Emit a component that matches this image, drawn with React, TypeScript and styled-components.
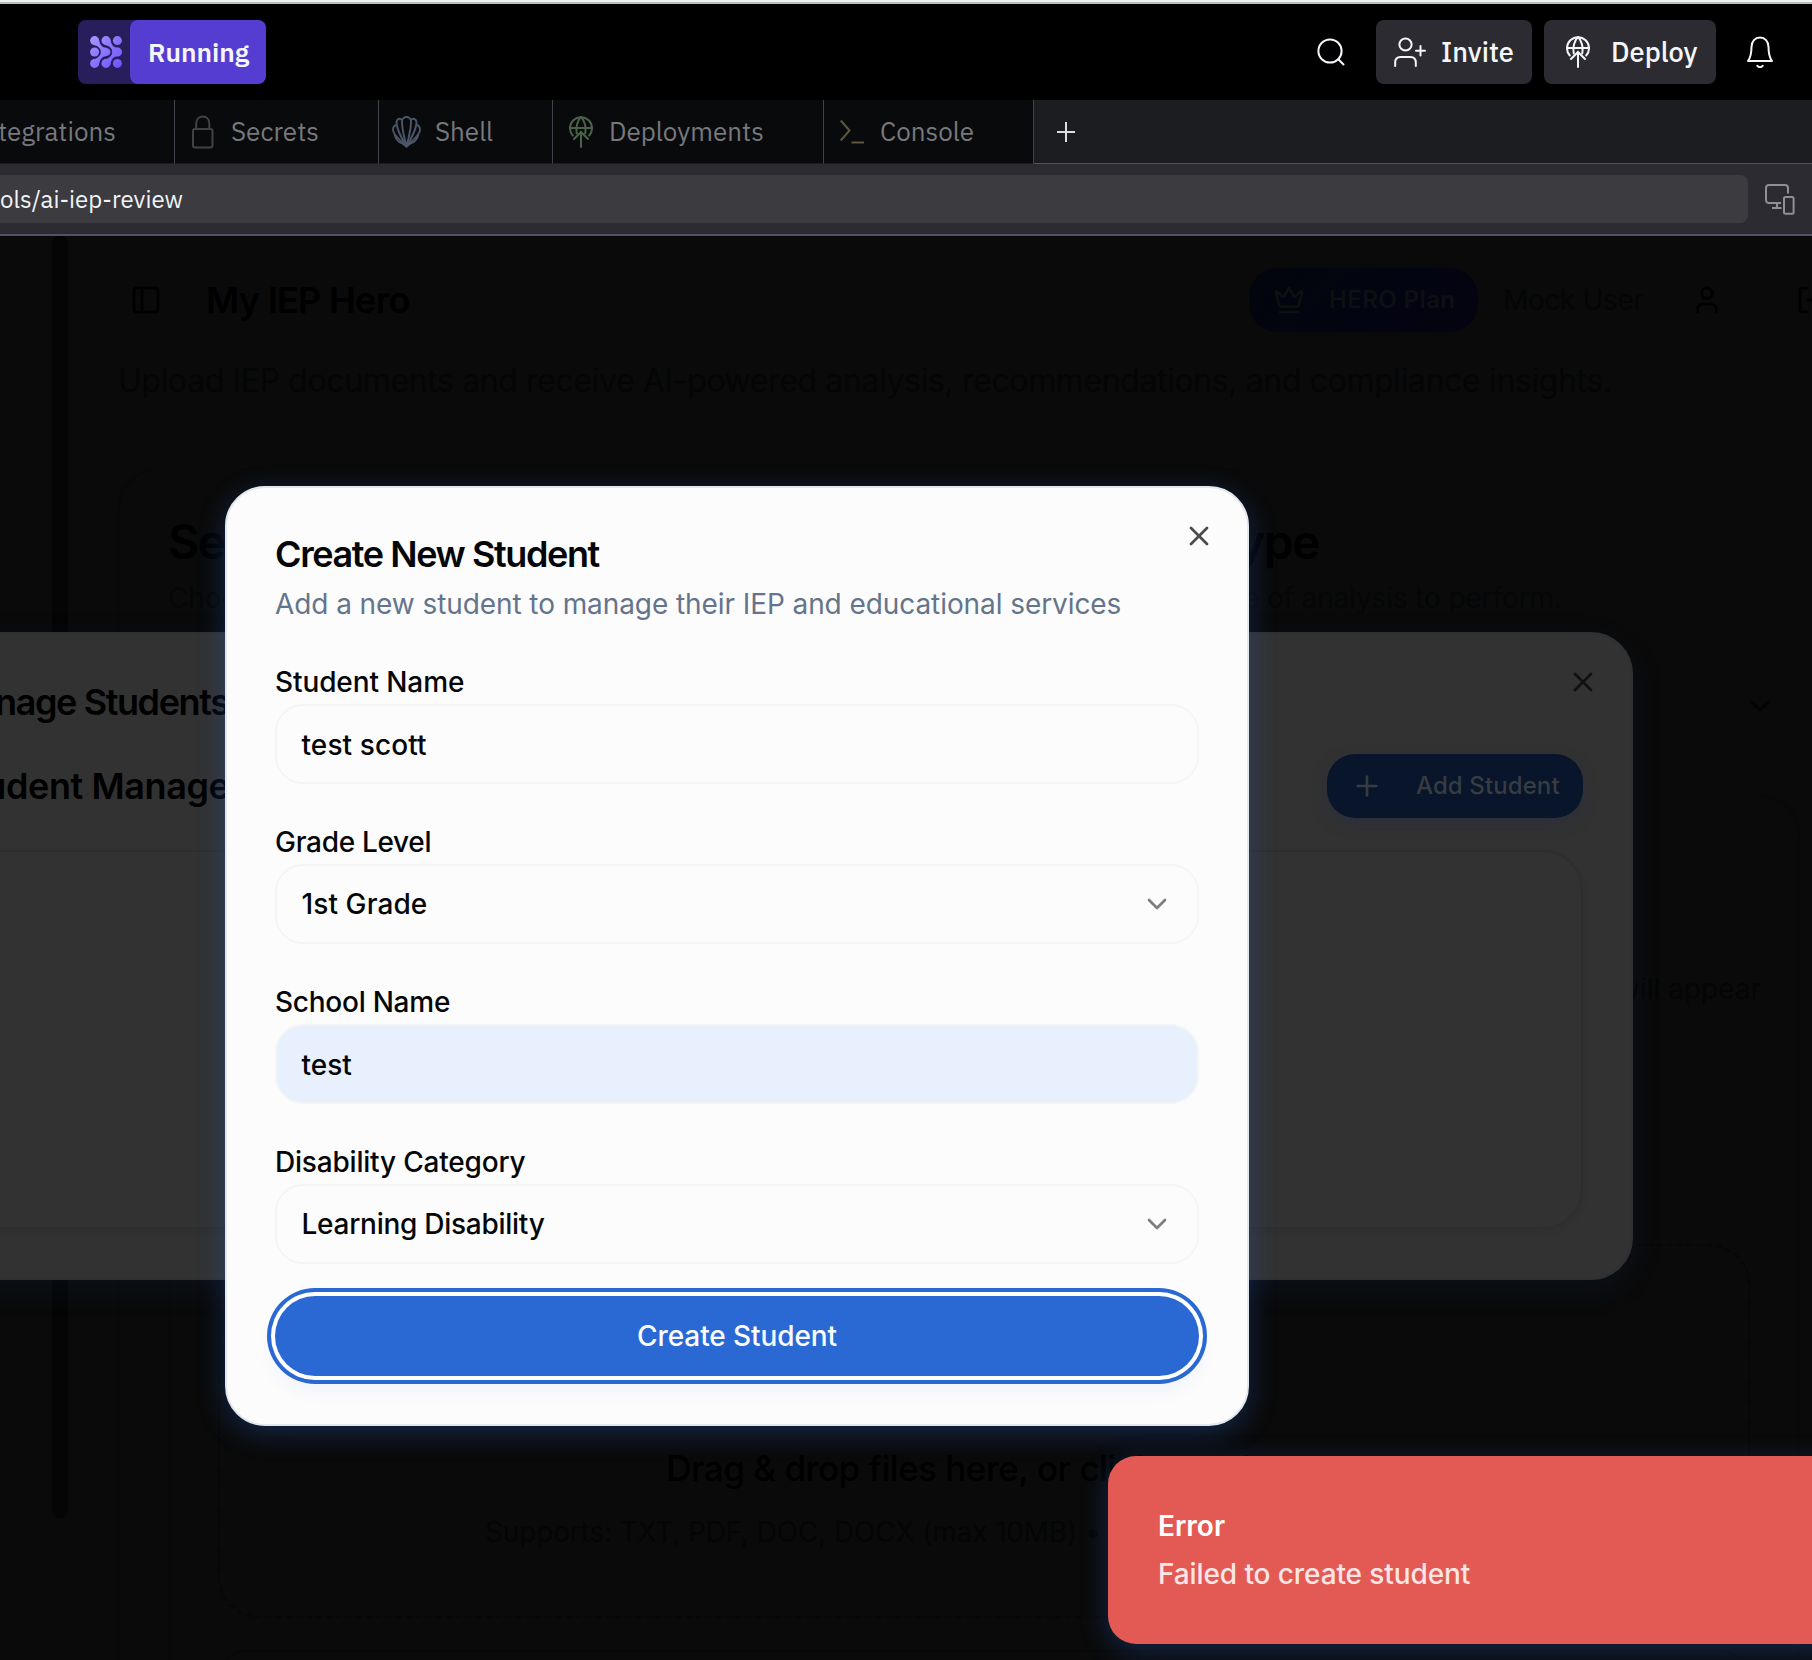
import React from 'react';
import styled, { createGlobalStyle } from 'styled-components';
import { ChevronDown, Crown, LogOut, PanelLeft, Plus, User, X } from 'lucide-react';

const ide = `"IBM Plex Sans", Roboto, "Noto Sans", sans-serif`;
const ui = `Inter, "Noto Sans", sans-serif`;

const Global = createGlobalStyle`
  * { box-sizing: border-box; }
  html, body { margin: 0; background: #000; overflow: hidden; }
  h1, h2, h3, p { margin: 0; font-weight: inherit; font-size: inherit; }
  button { border: 0; padding: 0; background: none; color: inherit; font: inherit; }
`;

const Screen = styled.div`
  position: relative;
  width: 1812px;
  height: 1660px;
  overflow: hidden;
  display: flex;
  flex-direction: column;
  background: #0a0a0a;
  font-family: ${ui};
  white-space: nowrap;
`;

const Txt = styled.span<{ $s: number; $lh: number; $w?: number; $ls?: number; $c?: string; $mt?: number }>`
  display: block;
  flex: none;
  font-size: ${p => p.$s}px;
  line-height: ${p => p.$lh}px;
  font-weight: ${p => p.$w ?? 400};
  letter-spacing: ${p => p.$ls ?? 0}px;
  color: ${p => p.$c ?? 'inherit'};
  && { margin-top: ${p => p.$mt ?? 0}px; }
`;

/* ---------- IDE chrome ---------- */

const TopBar = styled.header`
  flex: none;
  height: 100px;
  padding: 12px 39px 0 78px;
  border-top: 4px solid #b5beba;
  background: #000;
  display: flex;
  align-items: flex-start;
  position: relative;
  font-family: ${ide};
  color: #f5f6fa;
`;

const WindowEdge = styled.div`
  position: absolute;
  top: -4px;
  left: 0;
  right: 0;
  height: 2px;
  background: #eef2f0;
`;

const RunGroup = styled.div`
  display: flex;
  width: 188px;
  height: 64px;
  margin-top: 4px;
  border-radius: 8px;
  background: #281e5c;
`;

const RunMark = styled.div`
  width: 52px;
  height: 64px;
  padding-left: 12px;
  display: flex;
  align-items: center;
`;

const RunButton = styled.button`
  width: 136px;
  height: 64px;
  padding-left: 18px;
  border-radius: 8px;
  background: #543dd0;
  text-align: left;
`;

const TopActions = styled.div`
  margin: 4px 0 0 auto;
  height: 64px;
  display: flex;
  align-items: center;
`;

const TopButton = styled.button<{ $w: number; $ml: number; $pl: number; $gap: number }>`
  width: ${p => p.$w}px;
  height: 64px;
  margin-left: ${p => p.$ml}px;
  padding-left: ${p => p.$pl}px;
  display: flex;
  align-items: center;
  gap: ${p => p.$gap}px;
  border-radius: 8px;
  background: #2b2b31;
`;

const BellSlot = styled.div`
  margin-left: 31px;
  display: flex;
`;

const Tabs = styled.nav`
  flex: none;
  height: 64px;
  display: flex;
  background: #1c1d21;
  font-family: ${ide};
  color: #77787c;
`;

const Tab = styled.div<{ $w: number; $pl: number; $gap?: number }>`
  width: ${p => p.$w}px;
  padding-left: ${p => p.$pl}px;
  display: flex;
  align-items: center;
  gap: ${p => p.$gap ?? 0}px;
  background: #090a0c;
  border-right: 1px solid #42434f;
  border-bottom: 1px solid #1c1d21;
`;

const TabLabel = styled.span<{ $shift?: number }>`
  display: block;
  margin-left: ${p => p.$shift ?? 0}px;
  padding-bottom: 2px;
  font-size: 26px;
  line-height: 60px;
`;

const TabGlyph = styled.span`
  display: flex;
  color: #4a6348;
`;

const TabRest = styled.div`
  flex: 1;
  padding-left: 22px;
  display: flex;
  align-items: center;
  border-bottom: 1px solid #4f5060;
`;

const AddressBar = styled.div`
  flex: none;
  height: 72px;
  display: flex;
  align-items: center;
  background: #2b2b31;
  border-bottom: 2px solid #4f5268;
  font-family: ${ide};
`;

const AddressField = styled.div`
  width: 1748px;
  height: 48px;
  margin-right: 17px;
  display: flex;
  align-items: center;
  border-radius: 0 8px 8px 0;
  background: #3b3b40;
`;

/* ---------- dimmed page ---------- */

const Page = styled.div`
  flex: 1;
  min-height: 0;
  display: flex;
`;

const Rail = styled.aside`
  flex: none;
  width: 68px;
  padding-left: 52px;
`;

const RailThumb = styled.div`
  width: 16px;
  height: 1282px;
  border-radius: 8px;
  background: #050505;
`;

const Main = styled.main`
  flex: none;
  width: 1794px;
  display: flex;
  flex-direction: column;
`;

const AppHeader = styled.div`
  flex: none;
  height: 129px;
  padding: 0 0 0 62px;
  display: flex;
  align-items: center;
  gap: 44px;
  border-bottom: 1px solid #080808;
  color: #000;
`;

const HeroPlan = styled.div`
  width: 229px;
  height: 64px;
  margin-left: auto;
  padding-left: 24px;
  display: flex;
  align-items: center;
  gap: 24px;
  border-radius: 28px;
  background: linear-gradient(135deg, #02050b, #030412 60%, #05030f);
  color: #0d0f11;
`;

const HeaderUser = styled.div`
  width: 359px;
  margin-left: -19px;
  display: flex;
  align-items: center;
  svg { flex: none; }
`;

const UserIcons = styled.span`
  margin-left: 47px;
  display: flex;
  gap: 73px;
`;

const Intro = styled.div`
  flex: none;
  padding-left: 50px;
`;

const Card = styled.section`
  flex: none;
  margin: 71px 0 0 50px;
  width: 1732px;
  height: 1400px;
  padding: 48px;
  border: 2px solid #090909;
  border-radius: 40px;
`;

const CardTitle = styled.div`
  width: 1151px;
  display: flex;
  justify-content: space-between;
`;

const SelectRow = styled.div`
  height: 80px;
  margin-top: 48px;
  padding-right: 24px;
  display: flex;
  align-items: center;
  justify-content: flex-end;
  color: #040404;
`;

const ResultCard = styled.div`
  height: 1000px;
  margin-top: 49px;
  padding: 172px 48px 0;
  border: 2px solid #090909;
  border-radius: 40px;
`;

const RightText = styled.div`
  display: flex;
  justify-content: flex-end;
  margin-right: -11px;
`;

const DropZone = styled.div`
  height: 374px;
  margin-top: 235px;
  padding-top: 200px;
  border: 2px dashed #070707;
  border-radius: 40px;
  display: flex;
  flex-direction: column;
  align-items: center;
  gap: 22px;
`;

const NextBox = styled.div`
  height: 120px;
  margin-top: 32px;
  border: 2px solid #080808;
  border-radius: 28px;
`;

/* ---------- dialogs ---------- */

const ManageDialog = styled.div`
  position: absolute;
  top: 632px;
  left: -160px;
  width: 1793px;
  height: 648px;
  padding: 48px;
  border: 2px solid #2f3031;
  border-radius: 42px;
  background: #323232;
  box-shadow: 0 10px 32px rgba(24, 64, 140, 0.12);
  color: #000;
`;

const DialogClose = styled.button<{ $c: string }>`
  position: absolute;
  top: 32px;
  right: 32px;
  display: flex;
  color: ${p => p.$c};
`;

const ManageTitle = styled.div`
  padding-left: 54px;
`;

const ManageRow = styled.div`
  height: 64px;
  margin-top: 32px;
  padding-left: 59px;
  display: flex;
  align-items: center;
  justify-content: space-between;
`;

const AddStudent = styled.button`
  width: 256px;
  height: 64px;
  padding-left: 24px;
  display: flex;
  align-items: center;
  gap: 33px;
  border-radius: 28px;
  background: #08152a;
  color: #373c42;
  box-shadow: 0 6px 14px rgba(38, 46, 70, 0.5);
`;

const StudentList = styled.div`
  height: 379px;
  margin-top: 32px;
  border: 2px solid #2e2e2e;
  border-radius: 40px;
  box-shadow: 0 3px 4px rgba(42, 46, 56, 0.4);
`;

const CreateDialog = styled.form`
  position: absolute;
  top: 486px;
  left: 225px;
  width: 1024px;
  height: 940px;
  padding: 48px;
  display: flex;
  flex-direction: column;
  border: 2px solid #e2e8ee;
  border-radius: 40px;
  background: #fcfcfc;
  color: #050607;
  box-shadow: 0 7px 28px rgba(42, 104, 212, 0.32);
`;

const Field = styled.div`
  display: flex;
  flex-direction: column;
  gap: 8px;
  margin-top: 44px;
`;

const Control = styled.div<{ $filled?: boolean; $drop?: number }>`
  height: 80px;
  padding: ${p => p.$drop ?? 0}px 24px 0 24.500px;
  display: flex;
  align-items: center;
  justify-content: space-between;
  border: 2px solid #f4f5f5;
  border-radius: 28px;
  background: ${p => (p.$filled ? '#e8effd' : '#fcfcfc')};
  svg { color: #7d7d7e; }
`;

const Submit = styled.button`
  height: 80px;
  margin-top: 32px;
  display: flex;
  align-items: center;
  justify-content: center;
  border-radius: 40px;
  background: #2a68d4;
  color: #fbfcff;
  box-shadow: 0 0 0 4px #fff, 0 0 0 8px #2a68d4, 0 12px 20px 2px rgba(42, 80, 212, 0.06);
`;

const Toast = styled.div`
  position: absolute;
  top: 1456px;
  left: 1108px;
  width: 760px;
  height: 188px;
  padding: 50px;
  display: flex;
  flex-direction: column;
  gap: 8px;
  border-radius: 28px;
  background: #e35a55;
  box-shadow: 0 7px 28px rgba(42, 104, 212, 0.32);
`;

/* ---------- drawings ---------- */

const RunLogo = () => (
  <svg width="32" height="32" viewBox="0 0 32 32" fill="none">
    <defs>
      <linearGradient id="run" x1="0" y1="0" x2="32" y2="32" gradientUnits="userSpaceOnUse">
        <stop stopColor="#a797ff" />
        <stop offset="1" stopColor="#6b50ff" />
      </linearGradient>
    </defs>
    <g fill="url(#run)">
      {[[4.6, 4.6], [16, 4.6], [27.4, 4.6], [4.6, 16], [4.6, 27.4], [16, 27.4], [27.4, 27.4], [27.4, 16]].map(([x, y]) => (
        <circle key={`${x}-${y}`} cx={x} cy={y} r="4.500" />
      ))}
      <path d="M8.500 2.300C9.500 5.500 10 9.500 13.500 11.300C17.500 12 20.500 13 20.500 16C20.500 19 17.500 20 13.500 20.700C10 22.500 9.500 26.500 8.500 29.700L3 23.300C7.500 22.500 10.800 20 10.800 16C10.800 12 7.500 9.500 3 8.700Z" />
      <path d="M19.900 2.300C20.900 5.500 21.400 9.500 24.900 11.300C28.900 12 31.900 13 31.900 16C31.900 19 28.900 20 24.900 20.700C21.400 22.500 20.900 26.500 19.900 29.700L14.400 23.300C18.900 22.500 22.200 20 22.200 16C22.200 12 18.900 9.500 14.400 8.700Z" />
    </g>
  </svg>
);

const SearchIcon = () => (
  <svg width="28" height="28" viewBox="0 0 28 28" fill="none" stroke="currentColor" strokeWidth="2" strokeLinecap="round">
    <circle cx="13" cy="13" r="11.6" />
    <path d="M21.300 21.300L26.500 26.500" />
  </svg>
);

const InviteIcon = () => (
  <svg width="32" height="30" viewBox="0 0 32 30" fill="none" stroke="currentColor" strokeWidth="2" strokeLinecap="round">
    <circle cx="11.500" cy="7.500" r="6.100" />
    <path d="M1.200 29V25.500C1.200 21.800 3.300 20 6.500 20H16.500C19.700 20 21.800 21.800 21.800 25.500V29" />
    <path d="M26.500 9V18.500M22 13.700H31" />
  </svg>
);

const DeployIcon = () => (
  <svg width="24" height="32" viewBox="0 0 24 32" fill="none" stroke="currentColor" strokeWidth="2" strokeLinecap="round">
    <path d="M3.800 19.500A11 11 0 1 1 20.200 19.500" />
    <path d="M1 12H23" />
    <path d="M7.800 17.500C6.600 11 8.500 4 12 1C15.500 4 17.400 11 16.200 17.500" />
    <path d="M12 31V16.500M5 23L12 16L19 23" />
  </svg>
);

const BellIcon = () => (
  <svg width="26" height="32" viewBox="0 0 26 32" fill="none" stroke="currentColor" strokeWidth="2" strokeLinecap="round" strokeLinejoin="round">
    <path d="M1 25C3.500 21.500 4.500 18 4.500 11C4.500 5.300 8.200 1.500 13 1.500S21.500 5.300 21.500 11C21.500 18 22.500 21.500 25 25Z" />
    <path d="M10.300 29.800C11.500 31.600 14.500 31.600 15.700 29.800" />
  </svg>
);

const LockIcon = () => (
  <svg width="22" height="34" viewBox="0 0 22 34" fill="none" stroke="#414244" strokeWidth="2">
    <rect x="1" y="14" width="19.500" height="18.600" rx="2" />
    <path d="M4.200 14V8.500C4.200 4.200 7 1.500 10.800 1.500S17.300 4.200 17.300 8.500V14" />
  </svg>
);

const ShellIcon = () => (
  <svg width="29" height="33" viewBox="0 0 29 33" fill="none" stroke="#4b5669" strokeWidth="1.900" strokeLinejoin="round">
    <path d="M14.500 31.500C11.500 20 9.800 12 10 6.500C10 0.500 19 0.500 19 6.500C19.200 12 17.500 20 14.500 31.500Z" />
    <path d="M10 5C7 2.300 3.700 5 4.700 9.500C5.500 15 10 24 14.500 31.500" />
    <path d="M19 5C22 2.300 25.300 5 24.300 9.500C23.500 15 19 24 14.500 31.500" />
    <path d="M4.500 9.800C1 10.500 0.300 14.500 1.800 17.500C3.500 21.500 9 26 14.500 31.500" />
    <path d="M24.500 9.800C28 10.500 28.700 14.500 27.200 17.500C25.500 21.500 20 26 14.500 31.500" />
    <path d="M2.500 19C3.500 24 7 28 10.500 28.500L14.500 31.500L18.500 28.500C22 28 25.500 24 26.500 19" />
  </svg>
);

const ConsoleIcon = () => (
  <svg width="24" height="26" viewBox="0 0 24 26" fill="none" stroke="#5d573f" strokeWidth="2">
    <path d="M0.800 1.500L9.500 11.500L0.800 21.500M11.500 23.600H24" />
  </svg>
);

const DevicesIcon = () => (
  <svg width="30" height="31" viewBox="0 0 30 31" fill="none" stroke="#8f9096" strokeWidth="2">
    <path d="M16 19H4C2.200 19 1 17.800 1 16V4C1 2.200 2.200 1 4 1H20C21.800 1 23 2.200 23 4V9.500" />
    <rect x="19" y="13" width="9.600" height="16.800" rx="1.500" />
    <path d="M12 19V24M7 24H16.500" />
  </svg>
);

const PlusThin = () => (
  <svg width="20" height="22" viewBox="0 0 20 22" fill="none" stroke="#dddee2" strokeWidth="2">
    <path d="M10 1V21M1 11H19" />
  </svg>
);

export default function App() {
  return (
    <>
      <Global />
      <Screen>
        <TopBar>
          <WindowEdge />
          <RunGroup>
            <RunMark><RunLogo /></RunMark>
            <RunButton><Txt $s={26.4} $lh={64} $w={600}>Running</Txt></RunButton>
          </RunGroup>
          <TopActions>
            <SearchIcon />
            <TopButton $w={156} $ml={31} $pl={18} $gap={15}>
              <InviteIcon />
              <Txt $s={27.2} $lh={64} $w={500}>Invite</Txt>
            </TopButton>
            <TopButton $w={172} $ml={12} $pl={22} $gap={21}>
              <DeployIcon />
              <Txt $s={27.2} $lh={64} $w={500}>Deploy</Txt>
            </TopButton>
            <BellSlot><BellIcon /></BellSlot>
          </TopActions>
        </TopBar>

        <Tabs>
          <Tab $w={175} $pl={0}><TabLabel $shift={-2}>tegrations</TabLabel></Tab>
          <Tab $w={204} $pl={17} $gap={17}><LockIcon /><TabLabel>Secrets</TabLabel></Tab>
          <Tab $w={174} $pl={13} $gap={14}><ShellIcon /><TabLabel>Shell</TabLabel></Tab>
          <Tab $w={271} $pl={16} $gap={16}>
            <TabGlyph><DeployIcon /></TabGlyph>
            <TabLabel>Deployments</TabLabel>
          </Tab>
          <Tab $w={210} $pl={16} $gap={16}><ConsoleIcon /><TabLabel>Console</TabLabel></Tab>
          <TabRest><PlusThin /></TabRest>
        </Tabs>

        <AddressBar>
          <AddressField><Txt $s={24} $lh={48} $c="#f2f3f7">ols/ai-iep-review</Txt></AddressField>
          <DevicesIcon />
        </AddressBar>

        <Page>
          <Rail><RailThumb /></Rail>
          <Main>
            <AppHeader>
              <PanelLeft size={32} strokeWidth={2} />
              <Txt as="h1" $s={36} $lh={48} $w={600} $ls={-0.7}>My IEP Hero</Txt>
              <HeroPlan>
                <Crown size={32} />
                <Txt $s={24} $lh={32} $w={600} $ls={0.4}>HERO Plan</Txt>
              </HeroPlan>
              <HeaderUser>
                <Txt $s={28} $lh={40} $ls={-0.35} $c="#040506">Mock User</Txt>
                <UserIcons><User size={32} /><LogOut size={32} /></UserIcons>
              </HeaderUser>
            </AppHeader>
            <Intro>
              <Txt as="p" $s={32} $lh={32} $ls={-0.38} $c="#040506">
                Upload IEP documents and receive AI-powered analysis, recommendations, and compliance insights.
              </Txt>
            </Intro>
            <Card>
              <CardTitle>
                <Txt as="h2" $s={48} $lh={48} $w={600} $ls={-1.5} $c="#000">Select Student</Txt>
                <Txt as="h2" $s={48} $lh={48} $w={600} $ls={-1.5} $c="#000">Analysis Type</Txt>
              </CardTitle>
              <Txt as="p" $mt={12} $s={28} $lh={40} $ls={-0.12} $c="#050607">
                Choose the student whose documents you want reviewed, then pick the exact type of analysis to perform.
              </Txt>
              <SelectRow><ChevronDown size={32} /></SelectRow>
              <ResultCard>
                <RightText><Txt $s={28} $lh={40} $c="#040506">Your analysis results will appear</Txt></RightText>
                <DropZone>
                  <Txt $s={35} $lh={44} $w={500} $ls={-0.5} $c="#000">Drag &amp; drop files here, or click to select</Txt>
                  <Txt $s={28} $lh={40} $ls={-0.15} $c="#040506">Supports: TXT, PDF, DOC, DOCX (max 10MB) • Files are processed securely</Txt>
                </DropZone>
                <NextBox />
              </ResultCard>
            </Card>
          </Main>
        </Page>

        <ManageDialog>
          <DialogClose type="button" $c="#101010"><X size={32} /></DialogClose>
          <ManageTitle><Txt as="h2" $s={36} $lh={40} $w={600} $ls={-1.4}>Manage Students</Txt></ManageTitle>
          <ManageRow>
            <Txt as="h3" $s={36} $lh={48} $w={600} $ls={-0.4}>Student Management</Txt>
            <AddStudent type="button">
              <Plus size={32} />
              <Txt $s={24} $lh={32} $w={500} $ls={0.1}>Add Student</Txt>
            </AddStudent>
          </ManageRow>
          <StudentList />
        </ManageDialog>

        <CreateDialog>
          <DialogClose type="button" $c="#4a4b4c"><X size={32} /></DialogClose>
          <Txt as="h2" $s={36} $lh={36} $w={600} $ls={-1.4}>Create New Student</Txt>
          <Txt as="p" $mt={12} $s={28} $lh={40} $ls={-0.08} $c="#64748b">
            Add a new student to manage their IEP and educational services
          </Txt>
          <Field>
            <Txt $s={28} $lh={28} $w={500} $ls={-0.1}>Student Name</Txt>
            <Control $drop={2}><Txt $s={28} $lh={40} $w={500} $ls={0.1}>test scott</Txt></Control>
          </Field>
          <Field>
            <Txt $s={28} $lh={28} $w={500} $ls={-0.3}>Grade Level</Txt>
            <Control><Txt $s={28} $lh={40} $w={500} $ls={0.1}>1st Grade</Txt><ChevronDown size={32} /></Control>
          </Field>
          <Field>
            <Txt $s={28} $lh={28} $w={500} $ls={-0.25}>School Name</Txt>
            <Control $drop={2} $filled><Txt $s={28} $lh={40} $w={500}>test</Txt></Control>
          </Field>
          <Field>
            <Txt $s={28} $lh={28} $w={500} $ls={-0.2}>Disability Category</Txt>
            <Control><Txt $s={28} $lh={40} $w={500} $ls={-0.27}>Learning Disability</Txt><ChevronDown size={32} /></Control>
          </Field>
          <Submit type="button"><Txt $s={28} $lh={40} $w={500} $ls={-0.1}>Create Student</Txt></Submit>
        </CreateDialog>

        <Toast>
          <Txt $s={28} $lh={40} $w={600} $c="#fff">Error</Txt>
          <Txt $s={28} $lh={40} $w={500} $ls={-0.1} $c="#fbe6e5">Failed to create student</Txt>
        </Toast>
      </Screen>
    </>
  );
}
